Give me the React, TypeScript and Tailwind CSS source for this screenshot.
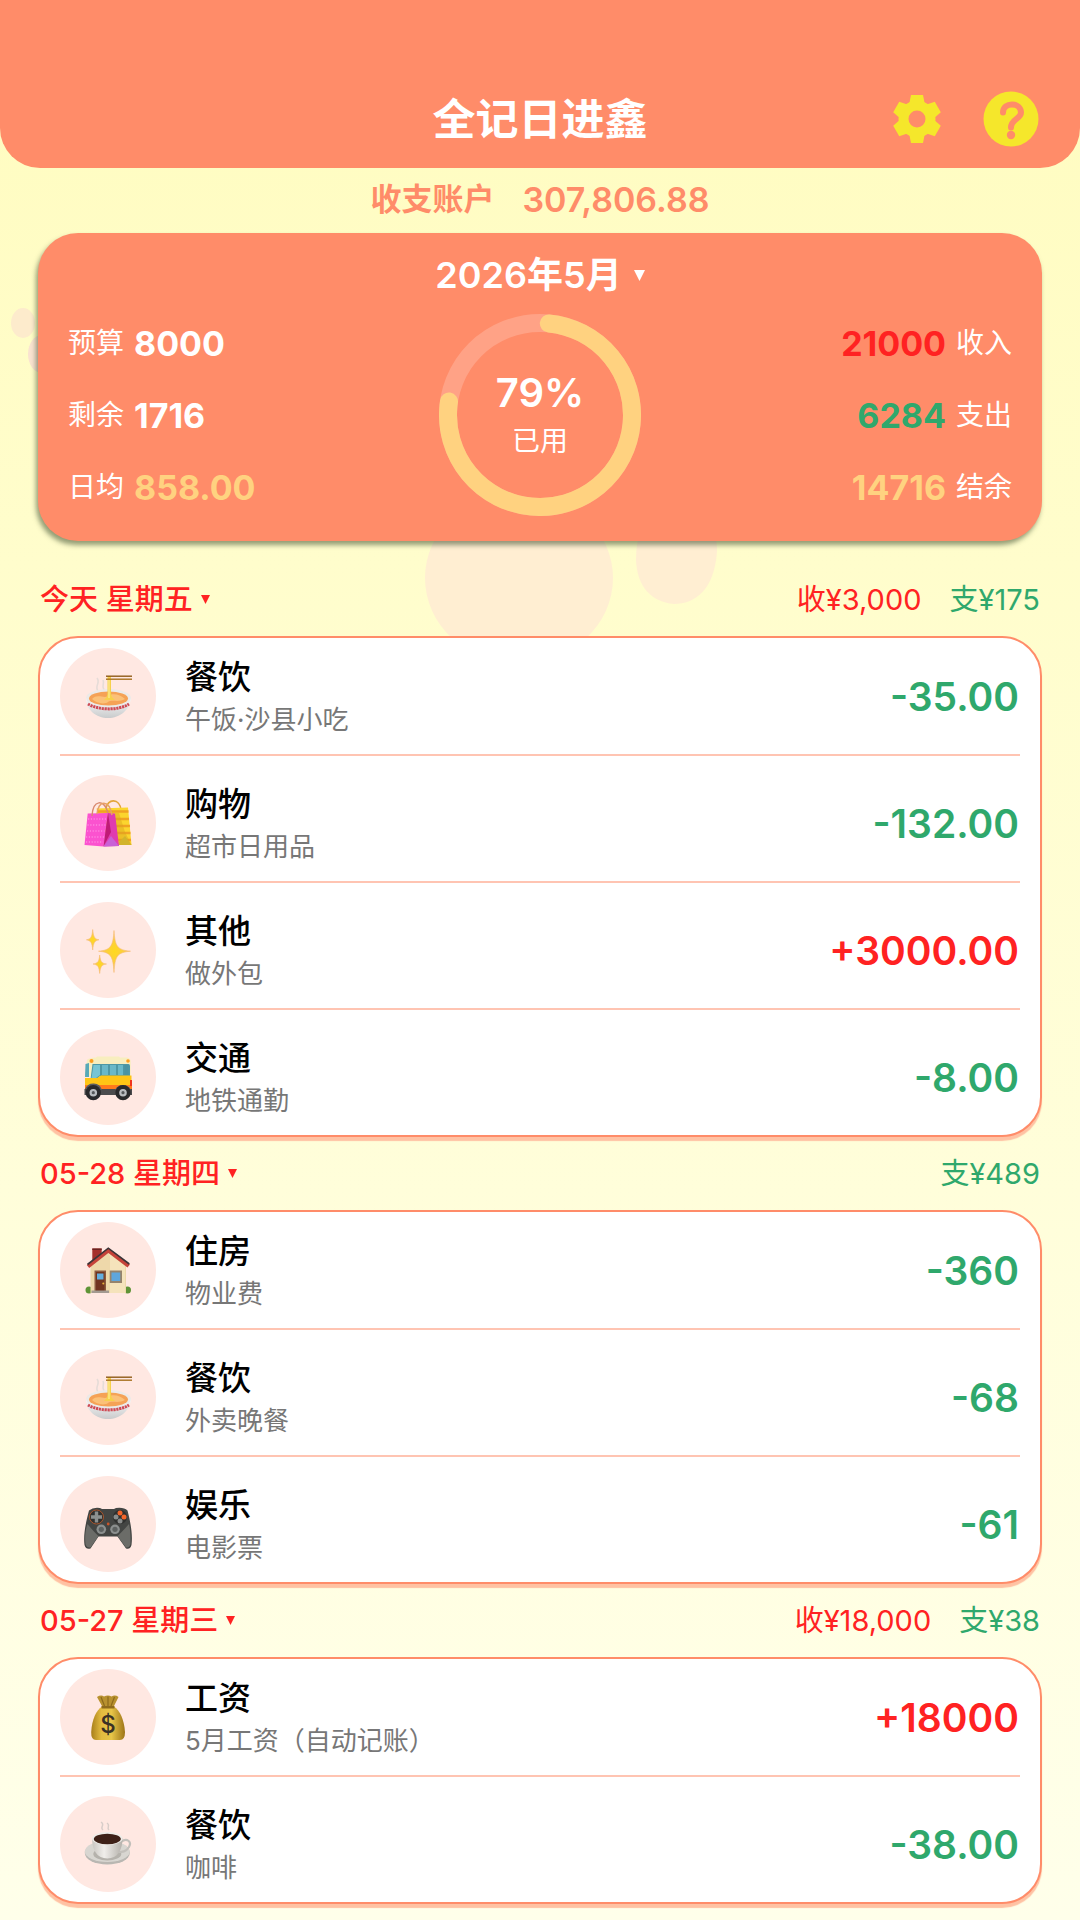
import React from 'react';

type IconName = 'ramen' | 'bags' | 'sparkles' | 'bus' | 'house' | 'gamepad' | 'money' | 'coffee';

interface Entry {
  id: string;
  icon: IconName;
  category: string;
  note: string;
  amount: string;
}

interface DayGroup {
  id: string;
  label: string;
  income?: string;
  expense?: string;
  entries: Entry[];
}

const days: DayGroup[] = [
  {
    id: '05-29',
    label: '今天 星期五',
    income: '收¥3,000',
    expense: '支¥175',
    entries: [
      { id: 'a1', icon: 'ramen', category: '餐饮', note: '午饭·沙县小吃', amount: '-35.00' },
      { id: 'a2', icon: 'bags', category: '购物', note: '超市日用品', amount: '-132.00' },
      { id: 'a3', icon: 'sparkles', category: '其他', note: '做外包', amount: '+3000.00' },
      { id: 'a4', icon: 'bus', category: '交通', note: '地铁通勤', amount: '-8.00' },
    ],
  },
  {
    id: '05-28',
    label: '05-28 星期四',
    expense: '支¥489',
    entries: [
      { id: 'b1', icon: 'house', category: '住房', note: '物业费', amount: '-360' },
      { id: 'b2', icon: 'ramen', category: '餐饮', note: '外卖晚餐', amount: '-68' },
      { id: 'b3', icon: 'gamepad', category: '娱乐', note: '电影票', amount: '-61' },
    ],
  },
  {
    id: '05-27',
    label: '05-27 星期三',
    income: '收¥18,000',
    expense: '支¥38',
    entries: [
      { id: 'c1', icon: 'money', category: '工资', note: '5月工资（自动记账）', amount: '+18000' },
      { id: 'c2', icon: 'coffee', category: '餐饮', note: '咖啡', amount: '-38.00' },
    ],
  },
];

function GearIcon() {
  return (
    <svg viewBox="-24 -24 48 48" className="w-12 h-12" fill="#f5e72b" aria-hidden="true">
      <path
        fillRule="evenodd"
        d="M0-18.5A18.5 18.5 0 1 1 0 18.5A18.5 18.5 0 1 1 0-18.5ZM0-8.5A8.5 8.5 0 1 0 0 8.5A8.5 8.5 0 1 0 0-8.5Z"
      />
      {[0, 60, 120, 180, 240, 300].map((angle) => (
        <path key={angle} d="M-6-24H6L8-14H-8Z" transform={`rotate(${angle})`} />
      ))}
    </svg>
  );
}

function HelpIcon() {
  return (
    <svg viewBox="-28 -28 56 56" className="w-14 h-14" aria-hidden="true">
      <circle r="27.5" fill="#f5e72b" />
      <path
        d="M-8-6.5C-8-17.5 10-17 10-6.5C10 0 0 0 0 8.5"
        fill="none"
        stroke="#ff8c69"
        strokeWidth="6"
        strokeLinecap="round"
      />
      <circle cy="16" r="4.2" fill="#ff8c69" />
    </svg>
  );
}

function Caret({ className }: { className: string }) {
  return (
    <svg viewBox="0 0 10 10" className={className} fill="currentColor" aria-hidden="true">
      <path d="M0 0H10L5 10Z" />
    </svg>
  );
}

function PawPrints() {
  return (
    <svg viewBox="0 0 1080 700" className="absolute top-0 left-0 w-full" aria-hidden="true">
      <ellipse cx="23" cy="323" rx="12" ry="15" fill="#fdebcc" />
      <ellipse cx="42" cy="354" rx="14" ry="19" fill="#fae3d0" />
      <ellipse cx="519" cy="578" rx="94" ry="86" fill="#ffeed2" />
      <path d="M636 560C636 520 655 500 678 500C700 500 718 525 717 552C714 590 695 604 674 604C650 602 637 585 636 560Z" fill="#ffeed2" />
    </svg>
  );
}

const drawings: Record<IconName, React.ReactNode> = {
  ramen: (
    <>
      <path d="M14 19C10 14 17 11 13 6M20 18C17 13 21 12 19 8" stroke="#e6dcd8" strokeWidth="1.6" fill="none" />
      <path d="M2 26C2 38 12 46 24 46S46 38 47 26Z" fill="url(#bowl)" />
      <path d="M4 32C14 38 34 39 45 32" stroke="#cf4a55" strokeWidth="3" strokeDasharray="2.2 .7" fill="none" />
      <ellipse cx="24.5" cy="26" rx="22.5" ry="9" fill="#eceae8" />
      <ellipse cx="24.5" cy="26.5" rx="19.5" ry="7" fill="#f5a256" />
      <path d="M8 27C13 21 20 27 24 24S36 22 41 27C34 31 28 27 24 30S12 31 8 27Z" fill="#fbc178" />
      <path d="M23.5 4H27V20C27 25 29 26 31 28H20C22 26 23.5 25 23.5 20Z" fill="#f6d14c" />
      <path d="M25 7V26" stroke="#fff0a0" strokeWidth="1" />
      <path d="M22 4.2H48" stroke="#8f5b17" strokeWidth="1.4" />
      <path d="M22 7.2H48" stroke="#a8711f" strokeWidth="1.4" />
    </>
  ),
  bags: (
    <>
      <path d="M22 10C23-1 36-1 37 11" stroke="#e3a53a" strokeWidth="1.6" fill="none" />
      <path d="M12.5 9.5L44 8.5L47.5 46H34L18 30Z" fill="#fbd52e" />
      <path d="M13 12.5H44.5M24 20H45M26 27H46M28 34H46.5M30 41H47" stroke="#f0a223" strokeWidth="2.6" />
      <path d="M31 14H35L41 33L47.5 46H33Z" fill="#d9a51c" opacity=".45" />
      <path d="M35 43L41 37L47.5 46H34Z" fill="#d2b32c" />
      <path d="M3.7 14.5L24 14L19.5 47.5L.5 46Z" fill="#fb52cf" />
      <path d="M24 14L31 14.5L35 47L19.5 47.5Z" fill="#e03bb0" />
      <path d="M24 14L27 33L19.5 47.5Z" fill="#c01b77" />
      <path d="M27 37L35 47L19.5 47.5Z" fill="#c861d6" />
      <path d="M4 20H22M3.5 26H21.5M3 32H20.5M2 38H20M2 43H19" stroke="#ffa0e8" strokeWidth="1.2" strokeDasharray="1.2 1.6" />
      <path d="M8 17C9 0 20 0 24 14" stroke="#d98a70" strokeWidth="1.5" fill="none" />
      <path d="M13 15C14 1 25 0 28 16" stroke="#e8a067" strokeWidth="1.5" fill="none" />
    </>
  ),
  sparkles: (
    <g fill="url(#gold)" stroke="#f6bb73" strokeWidth=".6">
      <path d="M30 4.5C31 20 33 24 46.5 25.2C33 26.500 31 30 30 46.500C29 30 27 26.500 14.500 25.200C27 24 29 20 30 4.500Z" />
      <path d="M8.700 3.500C9.500 11 10.500 13 15 13.800C10.500 14.700 9.500 16.500 8.700 24C8 16.500 7 14.700 2.400 13.800C7 13 8 11 8.700 3.500Z" />
      <path d="M15.700 29C16.500 35.500 17.500 37.300 22.500 38C17.500 38.800 16.500 40.500 15.700 47.500C15 40.500 14 38.800 9 38C14 37.300 15 35.500 15.700 29Z" />
    </g>
  ),
  bus: (
    <>
      <path d="M3 7Q4 5 12 4.500L13 3.500H35L36 4.500H43Q46.500 5 46.700 8V24H1Z" fill="#f8eebf" />
      <path d="M1.500 11L5 10V24H1Z" fill="#57a9b8" />
      <path d="M8.500 11H44.500Q46 11 46 13V23H16L13 26.500H6.500Z" fill="#4d98a6" />
      <path d="M9.500 12H16V22L12 25H7.500Z" fill="#77c4d3" />
      <path d="M18 12H24V22H18ZM26 12H32V22H26ZM34 12H39V22H34Z" fill="#69b8c8" />
      <path d="M40.500 12H44.500V22H40.500Z" fill="#4a93a2" />
      <circle cx="7.500" cy="8" r="2" fill="#ff9d1e" />
      <circle cx="44" cy="8" r="1.800" fill="#ff9d1e" />
      <path d="M1 25H13L17 22.500H47.500V38H1Z" fill="#ffc515" />
      <path d="M1 32H48V38H1Z" fill="#ff7a1c" />
      <path d="M46 27H48V33H46Z" fill="#f0341d" />
      <path d="M.5 36H48V42H.5Z" fill="#4b4b4d" />
      <path d="M1 36A9 9 0 0 1 18 37M31 37A9 9 0 0 1 47 37" fill="#5b5c5f" />
      <circle cx="9.300" cy="39.700" r="7.600" fill="#29292b" />
      <circle cx="9.300" cy="39.700" r="3.800" fill="#b9bcbf" />
      <circle cx="9.300" cy="39.700" r="1.600" fill="#55575a" />
      <circle cx="39" cy="39.700" r="7.600" fill="#29292b" />
      <circle cx="39" cy="39.700" r="3.800" fill="#b9bcbf" />
      <circle cx="39" cy="39.700" r="1.600" fill="#55575a" />
    </>
  ),
  house: (
    <>
      <circle cx="5" cy="44" r="3.500" fill="#5f9436" />
      <circle cx="43.500" cy="44" r="3.500" fill="#5f9436" />
      <path d="M8.300 2.500H17.700V14L8.300 20Z" fill="#a52f2b" />
      <path d="M8.300 2.500H17.700V4H8.300Z" fill="#6b2320" />
      <path d="M6.500 20L24.300 6L42 19V47H6.500Z" fill="#eed8aa" />
      <path d="M24.300 7L41 20V47H26V10Z" fill="#f5e3bb" />
      <path d="M4 20.500L24.300 4.500L44.700 20" stroke="#c5433a" strokeWidth="4" fill="none" />
      <path d="M3.500 18.500L24.300 2.200L45.300 18" stroke="#3b3437" strokeWidth="1.600" fill="none" />
      <path d="M10.500 24.500H22V45H10.500Z" fill="#8c5a3f" />
      <path d="M12 26H20.500V45H12Z" fill="#71341f" />
      <path d="M13 27.500H19.500V33.500H13Z" fill="#64aede" />
      <circle cx="19.300" cy="37.500" r="1" fill="#e8b23c" />
      <path d="M25.700 24.500H38V37H25.700Z" fill="#96836c" />
      <path d="M27.500 26.500H36.200V35H27.500Z" fill="#5fa6dc" />
      <path d="M7.500 44.500H25V47H7.500Z" fill="#a39a91" />
    </>
  ),
  gamepad: (
    <>
      <path
        d="M5 10.500Q9 7 16 8L18 9H30L32 8Q40 7 43.500 10.500C46 20 49 34 47.500 45Q46 50 42 48.500L33.500 36.500H14.500L6.500 48.500Q2 50 .5 45C-1 34 2.500 20 5 10.500Z"
        fill="#434543"
      />
      <path d="M3.500 24Q10 32 14.500 36L6.500 47.500Q2.500 48 1.500 44C.5 36 2 28 3.500 24ZM45 24Q38 32 33.500 36L42 47.500Q45.500 48 46.500 44C47 36 46 28 45 24Z" fill="#6b6c68" />
      <circle cx="12.500" cy="17" r="7" fill="#2f302f" stroke="#b4582b" strokeWidth=".9" />
      <path d="M10.800 11.500H14.200V15.300H18V18.700H14.200V22.500H10.800V18.700H7V15.300H10.800Z" fill="#8c908f" />
      <circle cx="36" cy="17" r="7" fill="#2f302f" />
      <circle cx="36" cy="13" r="2.500" fill="#f4652a" />
      <circle cx="40" cy="17" r="2.500" fill="#f4652a" />
      <circle cx="32" cy="17" r="2.500" fill="#8a8d8c" />
      <circle cx="36" cy="21" r="2.500" fill="#8a8d8c" />
      <circle cx="17.300" cy="29.300" r="4.800" fill="#8b8f8e" />
      <circle cx="17.300" cy="29.300" r="2.600" fill="#5d6160" />
      <circle cx="31" cy="29.300" r="4.800" fill="#8b8f8e" />
      <circle cx="31" cy="29.300" r="2.600" fill="#5d6160" />
      <circle cx="24.200" cy="24" r="1.400" fill="#c8552a" />
    </>
  ),
  money: (
    <>
      <path d="M13 4Q17 1.500 20 3.500Q24 1.500 27.500 3.500Q31 1.500 34.500 4L29.500 14H18.500Z" fill="#b8912f" />
      <path d="M17 4L20.500 13M24 3.500V13M30.500 4L27 13" stroke="#8d6a1b" strokeWidth="1.200" />
      <path d="M18 13.500H30C36 18 40 26 41 39Q41 47 36 47H12Q7 47 7.200 39C8 26 12 18 18 13.500Z" fill="url(#sack)" />
      <path d="M17.500 13H30.500V15.500H17.500Z" fill="#8f6b1c" />
      <text x="24" y="40" textAnchor="middle" fontSize="24" className="font-['Inter'] font-medium" fill="#3a3125">
        $
      </text>
    </>
  ),
  coffee: (
    <>
      <path d="M19 10C15 7 22 5 17 2M25 10C22 7 27 6 23 3" stroke="#d8cdc9" strokeWidth="1.400" fill="none" />
      <ellipse cx="23.300" cy="33" rx="22.500" ry="11.500" fill="#b9b7b2" />
      <ellipse cx="23.300" cy="31.500" rx="22.500" ry="10.500" fill="#d8d6d1" />
      <ellipse cx="23.300" cy="34" rx="14" ry="6.500" fill="#b5b2ac" />
      <path d="M37 22C43 17 48 22 45 27S38 32 34 32" stroke="#c3c0bb" strokeWidth="2.200" fill="none" />
      <path d="M8 18C8 30 13 38.500 23.300 38.500S38.500 30 38.500 18Z" fill="url(#cup)" />
      <ellipse cx="23.300" cy="18.500" rx="15.300" ry="6.500" fill="#eeece8" />
      <ellipse cx="23.300" cy="19" rx="13.500" ry="5.200" fill="#3e2118" />
    </>
  ),
};

// shared gradients for the category drawings
function IconDefs() {
  return (
    <svg className="absolute w-0 h-0" aria-hidden="true">
      <defs>
        <linearGradient id="bowl" x1="0" y1="0" x2="0" y2="1">
          <stop offset="0" stopColor="#fafafa" />
          <stop offset="1" stopColor="#c9cbcc" />
        </linearGradient>
        <linearGradient id="cup" x1="0" y1="0" x2="1" y2="0">
          <stop offset="0" stopColor="#c9c6c1" />
          <stop offset=".4" stopColor="#f0eeeb" />
          <stop offset="1" stopColor="#b4b0aa" />
        </linearGradient>
        <radialGradient id="gold">
          <stop offset="0" stopColor="#ffd91e" />
          <stop offset="1" stopColor="#f9c559" />
        </radialGradient>
        <linearGradient id="sack" x1="0" y1="0" x2="1" y2="0">
          <stop offset="0" stopColor="#a87f1b" />
          <stop offset=".3" stopColor="#e3bb3f" />
          <stop offset=".6" stopColor="#e8c548" />
          <stop offset="1" stopColor="#9c7417" />
        </linearGradient>
      </defs>
    </svg>
  );
}

function CategoryIcon({ name }: { name: IconName }) {
  return (
    <div className="w-24 h-24 shrink-0 rounded-full bg-[#ffe8e2] flex items-center justify-center">
      <svg viewBox="0 0 48 48" className="w-12 h-12 overflow-visible" aria-hidden="true">
        {drawings[name]}
      </svg>
    </div>
  );
}

function Stat({ label, value, color, reverse }: { label: string; value: string; color: string; reverse?: boolean }) {
  return (
    <div className={`flex items-center gap-[10px] h-[42px] ${reverse ? 'flex-row-reverse' : ''}`}>
      <span className="text-[28px]">{label}</span>
      <span className={`text-[34px] font-bold ${color}`}>{value}</span>
    </div>
  );
}

function UsageRing() {
  return (
    <div className="relative w-[202px] h-[202px]">
      <svg viewBox="-101 -101 202 202" className="w-full h-full" fill="none" strokeWidth="18" aria-hidden="true">
        <circle r="92" stroke="#ffa286" />
        <circle
          r="92"
          stroke="#ffd280"
          strokeLinecap="round"
          pathLength="360"
          strokeDasharray="273 360"
          transform="rotate(-84.500)"
        />
      </svg>
      <div className="absolute inset-0 flex flex-col items-center justify-center pt-[2px]">
        <span className="text-[40px] leading-[50px] font-semibold">79%</span>
        <span className="text-[28px] leading-[46px]">已用</span>
      </div>
    </div>
  );
}

function Summary() {
  return (
    <section className="rounded-[40px] bg-[#ff8c69] text-white px-[30px] pt-[6px] pb-[25px] shadow-[-2px_4px_5px_rgba(40,60,30,0.5)]">
      <div className="flex justify-center h-[75px] pb-[3px]">
        <button type="button" className="flex items-center gap-[12px] text-[36px] font-semibold">
          2026年5月
          <Caret className="w-[11px] h-[11px]" />
        </button>
      </div>
      <div className="grid grid-cols-[1fr_auto_1fr] items-center">
        <div className="flex flex-col gap-[30px]">
          <Stat label="预算" value="8000" color="text-white" />
          <Stat label="剩余" value="1716" color="text-white" />
          <Stat label="日均" value="858.00" color="text-[#ffd280]" />
        </div>
        <UsageRing />
        <div className="flex flex-col gap-[30px]">
          <Stat label="收入" value="21000" color="text-[#ff2222]" reverse />
          <Stat label="支出" value="6284" color="text-[#2fa86c]" reverse />
          <Stat label="结余" value="14716" color="text-[#ffd280]" reverse />
        </div>
      </div>
    </section>
  );
}

function DaySection({ day }: { day: DayGroup }) {
  return (
    <section>
      <div className="flex items-center justify-between h-[73px] px-[2px] text-[29px]">
        <button type="button" className="flex items-center gap-[8px] font-medium text-[#ff2222]">
          {day.label}
          <Caret className="w-[9px] h-[9px]" />
        </button>
        <div className="flex gap-7">
          {day.income && <span className="text-[#ff2222]">{day.income}</span>}
          {day.expense && <span className="text-[#2fa86c]">{day.expense}</span>}
        </div>
      </div>
      <ul className="rounded-[40px] border-2 border-[#ff8c69] bg-white px-5 pt-[10px] pb-[10px] shadow-[0_4px_1px_#ffc2a3]">
        {day.entries.map((entry, index) => (
          <li
            key={entry.id}
            className={`flex items-center ${index > 0 ? 'pt-[19px]' : ''} ${
              index < day.entries.length - 1 ? 'pb-[10px] border-b-2 border-[#ffc4b2]' : ''
            }`}
          >
            <CategoryIcon name={entry.icon} />
            <div className="ml-[29px] flex-1 pt-[2px]">
              <div className="text-[33px] leading-[46px] font-medium text-black">{entry.category}</div>
              <div className="text-[26px] leading-[40px] text-[#777777]">{entry.note}</div>
            </div>
            <span
              className={`pt-[2px] pr-[1px] text-[39px] font-semibold ${
                entry.amount.startsWith('+') ? 'text-[#ff2222]' : 'text-[#2fa86c]'
              }`}
            >
              {entry.amount}
            </span>
          </li>
        ))}
      </ul>
    </section>
  );
}

export default function App() {
  return (
    <div className="relative min-h-screen overflow-hidden bg-linear-to-b from-[#fffcbf] to-[#ffffea] font-['Inter','Noto_Sans_CJK_SC',sans-serif]">
      <IconDefs />
      <PawPrints />
      <div className="relative">
        <header className="grid grid-cols-[1fr_auto_1fr] items-center pt-[72px] pb-[2px] px-[41px] h-[168px] rounded-b-[40px] bg-[#ff8c69]">
          <h1 className="col-start-2 text-[43px] font-bold text-white">全记日进鑫</h1>
          <div className="flex justify-end items-center gap-[42px]">
            <button type="button" aria-label="设置">
              <GearIcon />
            </button>
            <button type="button" aria-label="帮助">
              <HelpIcon />
            </button>
          </div>
        </header>
        <div className="flex items-center justify-center gap-7 h-[65px] pb-[3px] font-semibold text-[#ff8c69]">
          <span className="text-[31px]">收支账户</span>
          <span className="text-[34px]">307,806.88</span>
        </div>
        <main className="px-[38px] pb-3">
          <Summary />
          <div className="mt-[22px]">
            {days.map((day) => (
              <DaySection key={day.id} day={day} />
            ))}
          </div>
        </main>
      </div>
    </div>
  );
}
